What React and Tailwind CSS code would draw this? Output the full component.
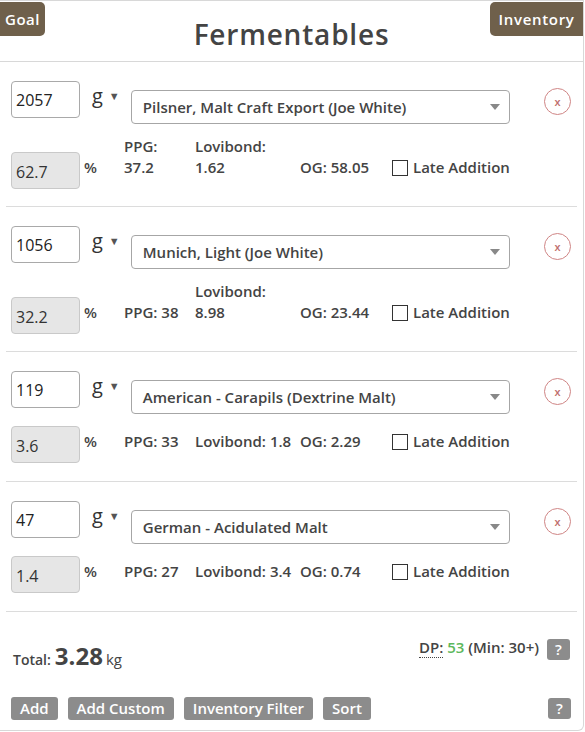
import React from "react";

const rows = [
  { amt: "2057", name: "Pilsner, Malt Craft Export (Joe White)", pct: "62.7", ppg: "37.2", lov: "1.62", og: "58.05", ppgTwo: true, lovTwo: true },
  { amt: "1056", name: "Munich, Light (Joe White)", pct: "32.2", ppg: "38", lov: "8.98", og: "23.44", ppgTwo: false, lovTwo: true },
  { amt: "119", name: "American - Carapils (Dextrine Malt)", pct: "3.6", ppg: "33", lov: "1.8", og: "2.29", ppgTwo: false, lovTwo: false },
  { amt: "47", name: "German - Acidulated Malt", pct: "1.4", ppg: "27", lov: "3.4", og: "0.74", ppgTwo: false, lovTwo: false },
];

function Stat({ label, value, two }) {
  if (two) {
    return (
      <div className="flex flex-col leading-[21px]">
        <span>{label}</span>
        <span>{value}</span>
      </div>
    );
  }
  return (
    <div className="leading-[21px]">
      {label} {value}
    </div>
  );
}

function Row({ r }) {
  return (
    <div className={r.lovTwo ? "shrink-0 mx-[6px] border-b border-[#dcdcdc] pl-[5px] pr-[6px] pt-[19px] pb-[17px]" : "shrink-0 mx-[6px] border-b border-[#dcdcdc] pl-[5px] pr-[6px] pt-[19px] pb-[18px]"}>
      <div className="flex items-start h-[43px]">
        <div className="w-[69px] h-[37px] border border-[#a9a9a9] rounded-[4px] bg-white flex items-center pl-[4px] text-[16px] font-normal text-[#222]">
          {r.amt}
        </div>
        <div className="w-[51px] flex items-start pl-[12px] pt-[5px]">
          <span className="text-[20px] leading-[20px] font-normal text-[#333]">g</span>
          <span className="ml-[6px] mt-[4px] text-[11px] leading-[11px] text-[#555]">▼</span>
        </div>
        <div className="mt-[9px] w-[380px] h-[34px] border border-[#a6a6a6] rounded-[4px] bg-white flex items-center pl-[11px] pr-[9px] justify-between">
          <span className="text-[15px]">{r.name}</span>
          <span className="w-0 h-0 border-l-[5px] border-r-[5px] border-t-[6px] border-l-transparent border-r-transparent border-t-[#888]"></span>
        </div>
        <div className="ml-[34px] mt-[7px] w-[27px] h-[27px] rounded-full border border-[#cf8585] flex items-center justify-center text-[11px] leading-none text-[#c06d6d] font-semibold">
          x
        </div>
      </div>
      <div className="mt-[12px] flex items-end">
        <div className="w-[69px] h-[37px] border border-[#c9c9c9] rounded-[4px] bg-[#e6e6e6] flex items-center pl-[4px] pt-[3px] text-[16px] font-normal text-[#333]">
          {r.pct}
        </div>
        <div className="flex items-end pb-[11px]">
          <div className="w-[44px] pl-[4px] leading-[21px]">%</div>
          <div className="w-[71px]"><Stat label="PPG:" value={r.ppg} two={r.ppgTwo} /></div>
          <div className="w-[105px]"><Stat label="Lovibond:" value={r.lov} two={r.lovTwo} /></div>
          <div className="w-[92px] leading-[21px]">OG: {r.og}</div>
          <div className="flex items-center leading-[21px]">
            <span className="w-[16px] h-[16px] border border-[#333] bg-white mr-[5px]"></span>
            <span className="text-[15px]">Late Addition</span>
          </div>
        </div>
      </div>
    </div>
  );
}

export default function App() {
  return (
    <div className="w-[585px] h-[732px] bg-white" style={{ fontFamily: '"Open Sans", sans-serif' }}>
      <div className="w-[584px] h-[731px] border-t border-r border-b border-[#d8d8d8] rounded-br-[6px] text-[#444] font-semibold text-[15px] flex flex-col">
        <div className="shrink-0 relative h-[61px] border-b border-[#d8d8d8] flex items-start justify-center">
          <div className="absolute left-0 top-[1px] h-[34px] px-[5px] bg-[#6f604b] rounded-r-[5px] text-white text-[15px] flex items-center tracking-[0.5px]">Goal</div>
          <div className="absolute right-0 top-[1px] h-[34px] w-[93px] bg-[#6f604b] rounded-l-[5px] text-white text-[15px] flex items-center justify-center tracking-[0.7px]">Inventory</div>
          <div className="mt-[14px] text-[28px] leading-[38px] tracking-[0.8px] text-[#444]">Fermentables</div>
        </div>
        {rows.map((r, i) => (
          <Row key={i} r={r} />
        ))}
        <div className="shrink-0 px-[13px] pt-[27px] flex items-start justify-between">
          <div className="mt-[-1px] flex items-baseline">
            <span className="text-[14px]">Total:</span>
            <span className="ml-[4px] text-[24px] font-bold">3.28</span>
            <span className="ml-[3px] text-[15px] font-normal">kg</span>
          </div>
          <div className="flex items-start">
            <span className="mt-[-3px]">
              <span className="border-b border-dotted border-[#444]">DP:</span>{" "}
              <span className="text-[#5cb85c]">53</span> (Min: 30+)
            </span>
            <span className="ml-[8px] w-[23px] h-[21px] rounded-[3px] bg-[#8c8c8c] text-white flex items-center justify-center">?</span>
          </div>
        </div>
        <div className="shrink-0 px-[11px] mt-[23px] flex items-center">
          <span className="h-[23px] px-[9px] bg-[#8c8c8c] rounded-[3px] text-white flex items-center">Add</span>
          <span className="ml-[10px] h-[23px] px-[9px] bg-[#8c8c8c] rounded-[3px] text-white flex items-center">Add Custom</span>
          <span className="ml-[10px] h-[23px] px-[9px] bg-[#8c8c8c] rounded-[3px] text-white flex items-center">Inventory Filter</span>
          <span className="ml-[10px] h-[23px] px-[9px] bg-[#8c8c8c] rounded-[3px] text-white flex items-center">Sort</span>
          <span className="ml-auto mr-[1px] w-[23px] h-[21px] rounded-[3px] bg-[#8c8c8c] text-white flex items-center justify-center">?</span>
        </div>
      </div>
    </div>
  );
}
